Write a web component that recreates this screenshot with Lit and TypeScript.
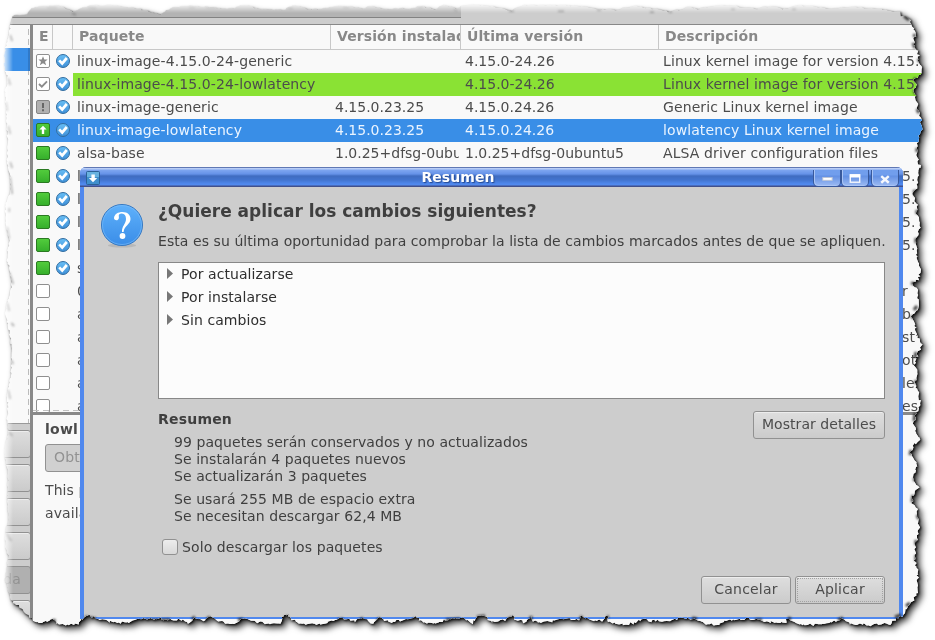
import { LitElement, html, css, svg, nothing } from 'lit';
import { customElement, property } from 'lit/decorators.js';
import { classMap } from 'lit/directives/class-map.js';

const font = css`
  :host { font-family: "DejaVu Sans", sans-serif; font-size: 14px; color: #4c4c4c; box-sizing: border-box; }
  * { box-sizing: border-box; }
`;

type State = 'star' | 'check' | 'alert' | 'up' | 'on' | 'off';
interface Pkg { state: State; ok: boolean; name: string; inst?: string; last?: string; desc?: string; tail?: string; tone?: 'green' | 'blue'; }

const kernel = 'Linux kernel image for version 4.15.0';
const packages: Pkg[] = [
  { state: 'star', ok: true, name: 'linux-image-4.15.0-24-generic', last: '4.15.0-24.26', desc: kernel },
  { state: 'check', ok: true, name: 'linux-image-4.15.0-24-lowlatency', last: '4.15.0-24.26', desc: kernel, tone: 'green' },
  { state: 'alert', ok: true, name: 'linux-image-generic', inst: '4.15.0.23.25', last: '4.15.0.24.26', desc: 'Generic Linux kernel image' },
  { state: 'up', ok: true, name: 'linux-image-lowlatency', inst: '4.15.0.23.25', last: '4.15.0.24.26', desc: 'lowlatency Linux kernel image', tone: 'blue' },
  { state: 'on', ok: true, name: 'alsa-base', inst: '1.0.25+dfsg-0ubuntu5', last: '1.0.25+dfsg-0ubuntu5', desc: 'ALSA driver configuration files' },
  { state: 'on', ok: true, name: 'l', tail: '5.' },
  { state: 'on', ok: true, name: 'l', tail: '5.' },
  { state: 'on', ok: true, name: 'l', tail: '5.' },
  { state: 'on', ok: true, name: 'l', tail: '5.' },
  { state: 'on', ok: true, name: 's' },
  { state: 'off', ok: false, name: '0', tail: 'r' },
  { state: 'off', ok: false, name: 'a', tail: 'b' },
  { state: 'off', ok: false, name: 'a', tail: 'st' },
  { state: 'off', ok: false, name: 'a', tail: 'ot' },
  { state: 'off', ok: false, name: 'a', tail: 'le' },
  { state: 'off', ok: false, name: 'a', tail: 'es' },
];

/* Outline of the torn sheet, clockwise from the top left. */
const outline: number[] = [
  13,16, 27,15, 30,9, 35,7, 50,6, 60,6, 72,12, 85,7, 95,5, 120,6, 140,9, 160,15, 170,8, 190,6, 205,7, 225,9, 235,8, 243,5, 260,9,
  285,10, 292,5, 310,10, 325,9, 335,6, 350,7, 362,9, 370,6, 385,10, 400,8, 410,10, 420,6, 435,10, 443,4, 455,9, 461,7, 468,4, 490,6,
  512,11, 522,5, 560,5, 580,6, 600,9, 615,10, 635,6, 650,8, 660,10, 670,12, 690,7, 697,9, 715,5, 735,6, 755,9, 770,6, 785,9, 800,5,
  820,7, 830,9, 850,7, 870,8, 885,10, 900,12, 902,16, 910,20, 913,27, 914,30, 916,35, 914,40, 913,45, 916,50, 919,55, 918,60, 921,65,
  921,73, 914,80, 916,85, 914,90, 916,95, 917,105, 919,113, 921,120, 922,125, 921,130, 918,137, 918,145, 917,152, 918,160, 920,165,
  917,172, 918,180, 916,188, 913,195, 914,199, 918,205, 917,213, 920,222, 919,232, 915,240, 917,250, 917,260, 920,270, 919,280, 911,283,
  917,290, 919,300, 917,310, 911,316, 915,325, 917,335, 922,345, 917,355, 915,365, 917,375, 916,385, 919,395, 920,405, 915,415,
  914,425, 916,432, 919,440, 914,446, 910,453, 915,460, 918,466, 915,473, 913,480, 919,487, 913,495, 912,502, 917,510, 918,520, 919,530,
  917,540, 915,545, 915,560, 917,570, 918,580, 918,590, 914,600, 908,606, 905,612, 902,616, 898,617, 890,624, 880,624, 870,625,
  860,624, 850,624, 843,618, 835,621, 828,623, 815,625, 800,625, 788,618, 785,622, 770,622, 750,619, 735,619, 725,622, 715,625,
  706,624, 697,619, 680,618, 665,621, 650,621, 643,618, 635,623, 620,625, 609,622, 607,615, 603,621, 590,620, 582,615, 578,620,
  565,619, 550,622, 540,623, 533,621, 531,615, 527,623, 515,620, 513,616, 505,620, 490,622, 485,615, 478,615, 472,623, 462,618,
  445,619, 435,624, 425,623, 415,617, 405,620, 390,623, 380,617, 372,624, 363,617, 355,621, 345,618, 335,620, 325,624, 305,624,
  292,620, 288,614, 283,616, 280,623, 262,623, 245,618, 235,623, 220,622, 210,616, 203,621, 195,616, 190,623, 180,620, 160,619,
  140,619, 130,622, 115,623, 100,619, 90,616, 84,617, 80,623, 68,625, 56,624, 54,618, 50,621, 38,623, 32,620, 24,612, 18,606, 14,603,
  10,597, 7,588, 5,580, 6,570, 8,555, 5,545, 5,535, 8,520, 7,500, 8,480, 7,470, 4,452, 5,445, 8,435, 7,420, 8,405, 7,395, 11,375,
  12,360, 10,335, 5,310, 9,297, 12,285, 10,270, 7,260, 9,240, 6,225, 5,205, 11,190, 10,178, 7,160, 8,150, 7,130, 6,110, 5,90, 8,80,
  5,69, 4,60, 5,48, 8,42, 9,32, 11,22,
];

/* Subdivides every segment and nudges the new points for a ragged fibre edge. */
function tornPolygon(points: number[]): string {
  const out: string[] = [];
  const n = points.length / 2;
  let seed = 7;
  const rnd = () => { seed = (seed * 16807) % 2147483647; return seed / 2147483647 - 0.5; };
  for (let i = 0; i < n; i++) {
    const x0 = points[i * 2], y0 = points[i * 2 + 1];
    const j = (i + 1) % n;
    const x1 = points[j * 2], y1 = points[j * 2 + 1];
    const rough = x0 > 900 || y0 > 600 ? 2.8 : 1.8;
    const steps = Math.max(1, Math.round(Math.hypot(x1 - x0, y1 - y0) / 2));
    for (let k = 0; k < steps; k++) {
      const t = k / steps;
      out.push(`${(x0 + (x1 - x0) * t + rnd() * rough).toFixed(1)}px ${(y0 + (y1 - y0) * t + rnd() * rough).toFixed(1)}px`);
    }
  }
  return `polygon(${out.join(',')})`;
}
const sheetShape = tornPolygon(outline);

@customElement('status-icon')
export class StatusIcon extends LitElement {
  @property() kind: State | 'ok' = 'off';
  static styles = css`:host { display: block; width: 14px; height: 14px; } svg { display: block; }`;
  render() {
    if (this.kind === 'ok') {
      return html`<svg width="14" height="14" viewBox="0 0 14 14">
        <defs><linearGradient id="g" x1="0" y1="0" x2="0" y2="1"><stop offset="0" stop-color="#68bef5"/><stop offset="1" stop-color="#3f90d8"/></linearGradient></defs>
        <circle cx="7" cy="7" r="6.5" fill="url(#g)" stroke="#336d9f"/>
        <path d="M3.2 6.4 6.2 9.4 10.8 4" fill="none" stroke="#fff" stroke-width="2.7"/></svg>`;
    }
    const green = this.kind === 'on' || this.kind === 'up';
    const stroke = green ? '#2b7a22' : this.kind === 'alert' ? '#858585' : '#8f8f8f';
    const fill = green ? 'url(#f)' : this.kind === 'alert' ? '#b1b1b1' : '#fff';
    return html`<svg width="14" height="14" viewBox="0 0 14 14">
      <defs><linearGradient id="f" x1="0" y1="0" x2="0" y2="1"><stop offset="0" stop-color="#53cd3d"/><stop offset="1" stop-color="#35ae2b"/></linearGradient></defs>
      <rect x=".5" y=".5" width="13" height="13" rx="1.5" fill=${fill} stroke=${stroke}/>
      ${this.kind === 'star' ? svg`<path d="M7 2.3 8.3 5.4 11.6 5.5 9 7.7 10.2 11.3 7 9.3 3.8 11.3 5 7.7 2.4 5.5 5.7 5.4z" fill="#8a8a8a"/>` : nothing}
      ${this.kind === 'check' ? svg`<path d="M3 7 5.8 9.6 11 4.4" fill="none" stroke="#8c8c8c" stroke-width="1.9"/>` : nothing}
      ${this.kind === 'alert' ? svg`<path d="M6 3h2v5H6zM6 9.2h2v2H6z" fill="#666"/>` : nothing}
      ${this.kind === 'up' ? svg`<path d="M7 2.8 10.6 6.6H8.2V11H5.8V6.6H3.4z" fill="#fff"/>` : nothing}
    </svg>`;
  }
}

@customElement('push-button')
export class PushButton extends LitElement {
  @property() label = '';
  @property({ type: Boolean, reflect: true }) focused = false;
  @property({ type: Boolean, reflect: true }) muted = false;
  static styles = [font, css`
    :host { display: flex; flex: none; align-items: center; justify-content: center; height: 28px; padding: 0 2px 2px; border: 1px solid #919191; border-radius: 3px;
      background: linear-gradient(#dedede, #cbcbcb); box-shadow: inset 0 1px #ededed; white-space: nowrap; letter-spacing: .2px; outline-offset: -3px; }
    :host([focused]) { outline: 1px dotted #a2a2a2; }
    :host([muted]) { color: #929292; background: #d0d0d0; box-shadow: none; }
  `];
  render() { return html`${this.label}`; }
}

@customElement('package-table')
export class PackageTable extends LitElement {
  static styles = [font, css`
    :host { display: block; height: 387px; overflow: hidden; background: #f9f9f9; white-space: nowrap; position: relative; }
    .line { display: grid; grid-template-columns: 20px 20px 258px 130px 198px 1fr; height: 23px; align-items: center; }
    .line > div { overflow: hidden; line-height: 23px; padding-left: 4px; height: 23px; border-right: 2px solid transparent; }
    .line > .icon { padding: 4px 0 0 3px; border: 0; }
    .name, .desc { letter-spacing: .1px; }
    .head { height: 25px; border-bottom: 1px solid #c8c8c8; font-weight: bold; color: #888; letter-spacing: .1px; }
    .line.head > div { height: 24px; line-height: 22px; padding-left: 6px; border-right: 1px solid #c8c8c8; }
    .line.head > div:last-child { border: 0; }
    .line.green > div:not(.icon) { background: #8ae234; }
    .line.blue { background: #398ee7; color: #eaf4ff; }
    .line .tail { padding-left: 243px; }
    .dash { position: absolute; left: 0; top: 385px; width: 48px; height: 1px; background: repeating-linear-gradient(90deg, #c2c2c2 0 6px, transparent 6px 10px); }
  `];
  render() {
    return html`
      <div class="line head"><div>E</div><div></div><div>Paquete</div><div>Versión instalada</div><div>Última versión</div><div>Descripción</div></div>
      ${packages.map(p => html`
        <div class=${classMap({ line: true, green: p.tone === 'green', blue: p.tone === 'blue' })}>
          <div class="icon"><status-icon .kind=${p.state}></status-icon></div>
          <div class="icon">${p.ok ? html`<status-icon .kind=${'ok'}></status-icon>` : nothing}</div>
          <div class="name">${p.name}</div><div>${p.inst}</div><div>${p.last}</div>
          <div class=${classMap({ desc: true, tail: !!p.tail })}>${p.tail ?? p.desc}</div>
        </div>`)}
      <div class="dash"></div>`;
  }
}

@customElement('summary-dialog')
export class SummaryDialog extends LitElement {
  static styles = [font, css`
    :host { display: flex; flex-direction: column; width: 823px; height: 452px; background: #cdcdcd; border: solid #5088ee; border-width: 0 4px 2px;
      border-radius: 6px 6px 0 0; white-space: nowrap; color: #3f3f3f; letter-spacing: .07px; }
    .title { display: flex; height: 20px; flex: none; margin: 0 -4px; padding: 0 4px 0 6px; border-radius: 6px 6px 0 0; align-items: center;
      background: linear-gradient(#6078b4 0 1px, #b9cdf6 1px 2px, #7ea6f0 3px, #6592e8 7px, #3f6cc0 9px, #4274cf 13px, #5089ee 17px, #5089ee 18px, #41508c 19px); }
    .title .app { width: 14px; height: 14px; margin-top: 2px; }
    .title h1 { flex: 1; margin: 0; text-align: center; font-size: 14px; line-height: 20px; color: #fff; padding-left: 3px; text-shadow: 1px 1px 1px #244a94; }
    .wb { width: 28px; height: 17px; margin: 2px 0 0; border: 1px solid #38599d; border-width: 0 1px 1px; border-radius: 0 0 5px 5px;
      background: linear-gradient(#719eed 0 5px, #6390e4 6px, #9dbbf3); box-shadow: inset 1px -1px #a9c4f5; display: block; }
    .wb.close { margin-left: 2px; }
    .body { flex: 1; display: grid; grid-template-columns: 74px 727px; align-content: start; padding-top: 14px; }
    .ask { margin: 3px 0 0 16px; }
    h2 { margin: 0; font-size: 17px; line-height: 21px; letter-spacing: 0; }
    .note { line-height: 20px; margin-top: 9px; }
    .list { grid-column: 2; margin-top: 11px; height: 137px; background: #fcfcfc; border: 1px solid #888; color: #2f2f2f; }
    .item { display: flex; align-items: center; height: 23px; padding-left: 8px; gap: 8px; }
    .item:first-child { margin-top: -1px; }
    .sum { grid-column: 2; display: flex; justify-content: space-between; align-items: flex-start; margin-top: 12px; }
    h3 { margin: 0; font-size: 14px; line-height: 17px; letter-spacing: .2px; }
    .facts { margin: 6px 0 0 16px; line-height: 17px; }
    .facts p { margin: 0 0 6px; }
    .check { display: flex; align-items: center; gap: 4px; margin: 14px 0 0 4px; line-height: 17px; letter-spacing: .1px; }
    .box { width: 16px; height: 16px; margin-top: -1px; border: 1px solid #919191; border-radius: 3px; background: linear-gradient(#ededed, #d9d9d9); }
    .actions { grid-column: 2; display: flex; justify-content: flex-end; gap: 4px; margin-top: 20px; }
    .actions push-button { width: 90px; }
    push-button.wide { width: 132px; letter-spacing: .05px; }
  `];
  render() {
    return html`
      <div class="title">
        <svg class="app" viewBox="0 0 14 14"><rect x=".5" y=".5" width="13" height="13" rx="1" fill="#3f8fcd" stroke="#2c6196"/><path d="M1 1h12v5H1z" fill="#68b2df"/><path d="M5.4 3.5h3.4V7h2.4L7 11.3 2.9 7h2.5z" fill="#fff"/></svg>
        <h1>Resumen</h1>
        <svg class="wb" viewBox="0 0 27 17"><rect x="9" y="8" width="10" height="3" fill="#fff" stroke="#bbc4d5"/></svg>
        <svg class="wb" viewBox="0 0 27 17"><rect x="8.500" y="5" width="10" height="8" fill="none" stroke="#f3f6fc" stroke-width="1.500"/><path d="M8 5h11v3h-11z" fill="#fff"/></svg>
        <svg class="wb close" viewBox="0 0 27 17"><path d="M9.500 6.500l8 7m0-7l-8 7" stroke="#f7f8fc" stroke-width="2.600"/></svg>
      </div>
      <div class="body">
        <svg class="ask" width="46" height="46" viewBox="0 0 46 46">
          <defs><linearGradient id="q" x1="0" y1="0" x2="0" y2="1"><stop offset="0" stop-color="#5fb1fb"/><stop offset="1" stop-color="#3a8de8"/></linearGradient></defs>
          <ellipse cx="22" cy="41.500" rx="14" ry="2" fill="#aaa" opacity=".6"/>
          <circle cx="22" cy="21" r="20.500" fill="url(#q)" stroke="#3578c2"/><circle cx="22" cy="21" r="19.500" fill="none" stroke="#7dc0fc" opacity=".6"/>
          <path d="M14 14C14.500 10 18 8 22.500 8c5 0 8 2.800 8 7 0 5.500-6.300 6.500-6.900 13h-1.600c-.4-6 4-8 4-13 0-3.300-1.400-5.400-4.200-5.400-2.200 0-3.300 1.200-3 2.600.3 1.400.2 4-2.300 4-1.600 0-2.500-.9-2.500-2.200z" fill="#fff"/><circle cx="22.500" cy="32" r="2.900" fill="#fff"/>
        </svg>
        <div><h2>¿Quiere aplicar los cambios siguientes?</h2>
          <div class="note">Esta es su última oportunidad para comprobar la lista de cambios marcados antes de que se apliquen.</div></div>
        <div class="list">${['Por actualizarse', 'Por instalarse', 'Sin cambios'].map(t => html`
          <div class="item"><svg width="6" height="11" viewBox="0 0 6 11"><path d="M0 0 6 5.500 0 11z" fill="#777"/></svg>${t}</div>`)}</div>
        <div class="sum">
          <div><h3>Resumen</h3>
            <div class="facts"><p>99 paquetes serán conservados y no actualizados<br>Se instalarán 4 paquetes nuevos<br>Se actualizarán 3 paquetes</p>
              <p>Se usará 255 MB de espacio extra<br>Se necesitan descargar 62,4 MB</p></div>
            <div class="check"><span class="box"></span>Solo descargar los paquetes</div></div>
          <push-button class="wide" label="Mostrar detalles"></push-button>
        </div>
        <div class="actions"><push-button label="Cancelar"></push-button><push-button label="Aplicar" focused></push-button></div>
      </div>`;
  }
}

@customElement('app-root')
export class AppRoot extends LitElement {
  static styles = [font, css`
    :host { display: block; position: relative; width: 935px; height: 640px; overflow: hidden; background: #fff; }
    .fade { mask-image: linear-gradient(90deg, transparent 2px, #000 13px), linear-gradient(transparent 3px, #000 13px); mask-composite: intersect; }
    .shadow { filter: drop-shadow(1.5px 1.5px 1px rgba(0,0,0,.9)) drop-shadow(3px 3px 3px rgba(0,0,0,.8)); }
    .sheet { position: relative; display: flex; flex-direction: column; width: 935px; height: 640px; background: #cdcdcd; }
    .top { height: 25px; flex: none; display: flex; border-bottom: 1px solid #888; }
    .tabs { width: 461px; height: 18px; background: #b3b3b3; border-bottom: 1px solid #828282; }
    .main { flex: 1; display: flex; min-height: 0; }
    .side { width: 30px; display: flex; flex-direction: column; flex: none; }
    .cats { height: 399px; flex: none; border-bottom: 1px solid #999; padding-top: 23px;
      background: repeating-linear-gradient(#bbb 0 6px, #f9f9f9 6px 10px) 28px 4px / 1px 100% no-repeat #f9f9f9; }
    .picked { height: 23px; background: #398ee7; border-right: 2px solid #3079c8; }
    .nav { padding-top: 6px; display: flex; flex-direction: column; gap: 6px; width: 31px; }
    .nav push-button { margin-left: -20px; }
    .nav .down { background: #b0b0b0; color: #929292; justify-content: flex-end; padding-right: 9px; box-shadow: none; }
    .right { flex: 1; border-left: 3px solid #898989; display: flex; flex-direction: column; min-width: 0; }
    .info { flex: 1; border-top: 3px solid #898989; background: #f9f9f9; padding: 5px 0 0 12px; line-height: 23px; white-space: nowrap; letter-spacing: .1px; }
    .info b { display: block; height: 24px; line-height: 19px; letter-spacing: .25px; }
    .info push-button { width: 90px; margin-bottom: 7px; justify-content: flex-start; padding-left: 8px; }
    summary-dialog { position: absolute; left: 80px; top: 167px; }
    .fibres { position: absolute; inset: 0; pointer-events: none; filter: blur(.8px); }
  `];
  render() {
    return html`<div class="fade"><div class="shadow"><div class="sheet" style="clip-path:${sheetShape}">
      <div class="top"><div class="tabs"></div></div>
      <div class="main">
        <div class="side">
          <div class="cats"><div class="picked"></div></div>
          <div class="nav">${['', '', '', '', 'da', ''].map(t => html`<push-button class=${classMap({ down: !!t })} label=${t}></push-button>`)}</div>
        </div>
        <div class="right">
          <package-table></package-table>
          <div class="info"><b>lowl</b><push-button muted label="Obt"></push-button>This p<br>availa</div>
        </div>
      </div>
      <summary-dialog></summary-dialog>
      <svg class="fibres" viewBox="0 0 935 640" width="935" height="640" fill="none" stroke-width="2">
        <path stroke="#777" opacity=".55" d="M10 35l2 6M8 78l2 7M6 102l1 9M8 126l2 8M10 162l2 6M9 208v4M10 177l2 17M7 227l2 12M9 272l4 12M7 303l2 8M11 323l3 3M9 340l1 12M11 360l2 4M8 390l2 9M9 432l3 4M6 533l5 8M18 609l5 6M47 7h10M72 13l4 2M88 7l8 1M189 7h6M206 7h10M288 8h5M343 7h6M418 7h5M454 9l3 2M509 11h5M558 11h6M597 10h4M650 12h4M669 12h3M731 9h4M792 9h4"/>
        <path stroke="#222" stroke-width="3" opacity=".85" d="M904 16l5 4M915 34l-1 3M913 43l2 5M918 59l2 3M914 78l3 4M914 90l2 4M917 109l2 4M917 148v4M914 190l2 6M917 210v4M916 238v5M911 283l5 1M917 306l-3 4M911 316l3 2M916 352l-1 6M916 380v4M915 413l-1 8M911 450l-1 5M914 478l1 3M913 495l-1 7M917 515l2 4M916 540v5M916 555v6M906 606l4-3M895 617l6-2M843 618l-5 2M788 618l3 1M755 620h7M697 619l-5-1M607 617h2M582 616l-2 4M531 616v4M513 617l-6 3M485 616l-8 1M460 619l-14 1M415 618l-2 3M380 618l-3 3M363 618l-4 3M343 619l-5 1M288 616l-3 2M243 619l-5 1M210 617l-3 2M195 617l-3 2M170 620l-25 1M96 619l-11-2M54 619v4"/>
      </svg>
    </div></div></div>`;
  }
}
